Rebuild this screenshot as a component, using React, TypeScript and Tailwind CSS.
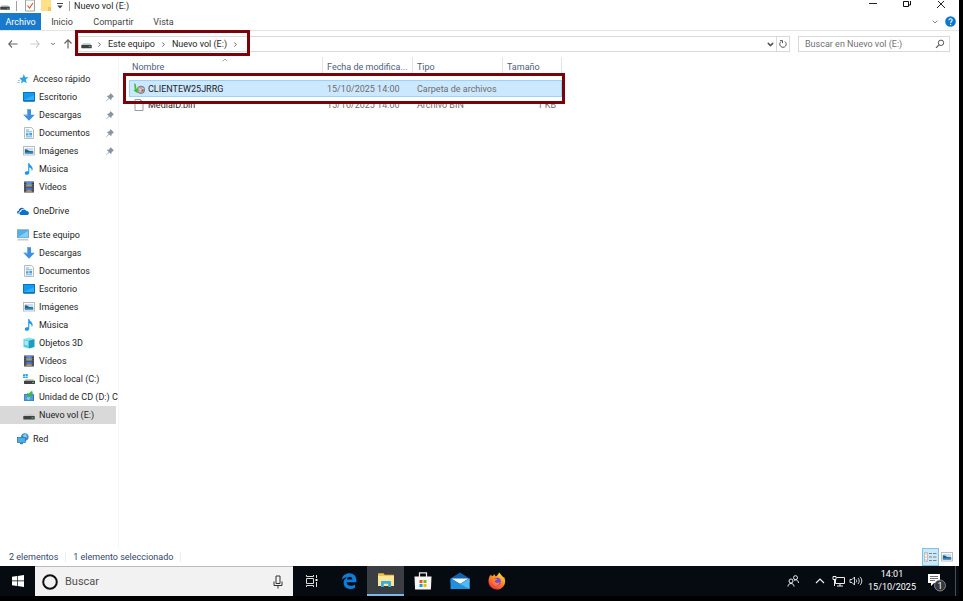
import type { ReactNode } from 'react';
import { ChevronDown, ChevronRight, ChevronUp } from 'lucide-react';
import clsx from 'clsx';

type IconProps = { className?: string };

function DriveIcon({ className = 'w-3 h-3' }: IconProps) {
  return (
    <svg viewBox="0 0 12 12" className={className}>
      <path d="M2 5.2h8l1.500 2.300h-11z" fill="#c4c6c8" />
      <rect x="0.300" y="7" width="11.400" height="3.600" rx="0.400" fill="#3f4244" />
      <rect x="8.500" y="8.300" width="2" height="1" fill="#38d05c" />
    </svg>
  );
}

function SystemDriveIcon() {
  return (
    <svg viewBox="0 0 12 12" className="w-3 h-3">
      <path d="M0 1.200h2v1.700H0zM2.500 1h2.200v1.900H2.500zM0 3.400h2v1.700H0zM2.500 3.400h2.200v1.700H2.500z" fill="#18a5e6" />
      <path d="M2.500 6h7.500l1.500 2h-10z" fill="#c9cbcc" />
      <rect x="1" y="7.700" width="11" height="3.300" rx="0.400" fill="#3f4244" />
      <rect x="9" y="8.900" width="2" height="1" fill="#38d05c" />
    </svg>
  );
}

function DiscIcon() {
  return (
    <svg viewBox="0 0 12 12" className="w-3 h-3">
      <path d="M1 3l9-.5 1 1V10H1z" fill="#3a78b4" />
      <path d="M1.500 3.500h8.500v6H1.500z" fill="#4f9bd8" />
      <circle cx="5.500" cy="7.300" r="1.700" fill="#8fc2e8" />
      <path d="M8.500 0L10 1 7.800 3.800l1.400 1.200-4.700 1.200L4 1.800l1.400 1z" fill="#38bb45" />
    </svg>
  );
}

function StarIcon() {
  return (
    <svg viewBox="0 0 12 12" className="w-3 h-3">
      <path d="M6.800 1l1.300 3.200 3.500.1-2.800 2.200 1 3.800-3-1.700-3 2.200 1-3.400L2.300 5l3.300-.6z" fill="#2f9fe8" />
      <path d="M1 7.500h2M0.500 9.500h2" stroke="#7cc3f2" strokeWidth="0.900" />
    </svg>
  );
}

function DesktopIcon() {
  return (
    <svg viewBox="0 0 12 12" className="w-3 h-3">
      <rect x="0.500" y="1.500" width="11" height="8.500" fill="#109bf0" stroke="#0873c4" />
      <path d="M1 9l10-5v5z" fill="#31b0fa" />
      <path d="M1 10h10" stroke="#0b5fa5" />
    </svg>
  );
}

function DownloadIcon() {
  return (
    <svg viewBox="0 0 12 12" className="w-3 h-3">
      <path d="M4 .3h4v5.500h3.800L6 11.700.2 5.800H4z" fill="#3f8fdc" />
      <path d="M4 .3h1v6.500H2.200l-2-1H4z" fill="#6bb2ee" />
    </svg>
  );
}

function DocumentIcon() {
  return (
    <svg viewBox="0 0 12 12" className="w-3 h-3">
      <path d="M1.500.5h7l2 2v9h-9z" fill="#f6f8f9" stroke="#a3adb4" strokeWidth="0.800" />
      <path d="M3 3h3M3 4.800h6M3 9.800h6" stroke="#63a9d8" strokeWidth="0.900" />
      <path d="M3 6.200h2.500v2.300H3zM6.300 6h2.700v2.500H6.300z" fill="#4c9ed8" />
    </svg>
  );
}

function PictureIcon({ className = 'w-3 h-3' }: IconProps) {
  return (
    <svg viewBox="0 0 12 12" className={className}>
      <rect x="0.500" y="1.500" width="11" height="8.500" fill="#fff" stroke="#b3b8bc" strokeWidth="0.900" />
      <rect x="1.800" y="2.800" width="8.400" height="6" fill="#c4e0f2" />
      <path d="M1.800 4.300l2.200.3 2.200 1.400 4 .3v1.500H1.800z" fill="#2b6177" />
      <path d="M1.800 7h8.400v1.800H1.800z" fill="#3685be" />
    </svg>
  );
}

function MusicIcon() {
  return (
    <svg viewBox="0 0 12 12" className="w-3 h-3">
      <path d="M5.200 0h1.100c.2 2.300 3.700 3 3.300 6.200-.1 1-.6 1.600-1 2 .6-2.300-.6-3.400-2.300-3.800v5c0 3-4.500 3.200-4.500.8 0-1.600 1.900-2.200 3.400-1.600z" fill="#1e96ee" />
    </svg>
  );
}

function VideoIcon() {
  return (
    <svg viewBox="0 0 12 12" className="w-3 h-3">
      <rect x="1" y="0.500" width="10" height="11" fill="#3b3f46" />
      <path d="M2 1v10M10 1v10" stroke="#a8a8a8" strokeWidth="0.800" strokeDasharray="1 1.200" />
      <rect x="3.200" y="1" width="5.600" height="4.500" fill="#568ce0" />
      <path d="M3.200 5.500V4.300l3-1 2.600.7v1.500z" fill="#b59a56" />
      <rect x="3.200" y="6.500" width="5.600" height="4.500" fill="#4278cf" />
      <path d="M3.200 11V9.800l3-1 2.600 1V11z" fill="#c08a50" />
    </svg>
  );
}

function CubeIcon() {
  return (
    <svg viewBox="0 0 12 12" className="w-3 h-3">
      <path d="M.5 2L6 .5 11.500 2 6 3.500z" fill="#8be4f0" />
      <path d="M.5 2L6 3.500v8L.5 10z" fill="#5ccbe0" />
      <path d="M11.500 2L6 3.500v8l5.500-1.500z" fill="#1b9fbd" />
      <path d="M1.500 3.500l3.500 1v4l-3.500-1z" fill="#a5ecf6" />
    </svg>
  );
}

function CloudIcon() {
  return (
    <svg viewBox="0 0 12 12" className="w-3 h-3">
      <path d="M1.600 9C-.6 8.600-.2 5.700 1.700 5.700 2 3 5.400 1.600 7.200 3.800c-3-.2-4 1.500-4.300 2.500C1.600 6.700 1.200 8 1.600 9z" fill="#0a63b8" />
      <path d="M3.900 10C1.600 9.800 1.800 6.700 4 6.700c.5-2.800 4.400-3.100 5.400-.6 3-.3 3.300 3.700.9 3.900z" fill="#0c72cf" />
    </svg>
  );
}

function ComputerIcon() {
  return (
    <svg viewBox="0 0 12 12" className="w-3 h-3">
      <rect x="0.500" y="0.800" width="11" height="7.800" fill="#4db2ec" stroke="#7d99ab" strokeWidth="0.800" />
      <path d="M1 8.200L11 2v6.200z" fill="#83cef7" />
      <path d="M1 9.800h10l.8 1.600H.2z" fill="#c3ccd2" />
    </svg>
  );
}

function NetworkIcon() {
  return (
    <svg viewBox="0 0 12 12" className="w-3 h-3">
      <circle cx="7.800" cy="4" r="3.800" fill="#3e8fcb" />
      <path d="M6 2l3-1 1 3-3 2z" fill="#8acbf1" />
      <rect x="0.400" y="4.500" width="8" height="5" fill="#45b1ee" stroke="#2b6f9e" strokeWidth="0.700" />
      <path d="M3 10h3v1.200H3z" fill="#55788f" />
    </svg>
  );
}

function PinIcon() {
  return (
    <svg viewBox="0 0 10 10" className="w-2.5 h-2.5">
      <path d="M5.500 1L9 4.500l-1 .4-1.500 1.500-.2 1.900L4.200 6.400 1.300 9.200 1 8.900l2.800-3-2-2 2-.3L5.200 2z" fill="#8996a1" />
    </svg>
  );
}

function BackupIcon() {
  return (
    <svg viewBox="0 0 12 12" className="w-3 h-3 shrink-0">
      <circle cx="8" cy="6.800" r="3.700" fill="#b5adad" stroke="#746a6a" strokeWidth="0.800" />
      <path d="M5.800 5.500l2 1.300 2.800-1.500M6.500 9l1.800-2" stroke="#e6e1e1" strokeWidth="0.900" fill="none" />
      <path d="M8.500 6.500h2v1.800h-2z" fill="#96525a" />
      <path d="M1 .3l1.800 1 .6 4.500 1.500-.6-.5 5L.3 7.200l1.500-.4z" fill="#43bd32" />
    </svg>
  );
}

function FileIcon() {
  return (
    <svg viewBox="0 0 12 12" className="w-3 h-3 shrink-0">
      <path d="M2 .5h5.500l2.500 2.500v8.500H2z" fill="#fff" stroke="#8f8f8f" strokeWidth="0.900" />
      <path d="M7.500.5V3H10" fill="none" stroke="#8f8f8f" strokeWidth="0.900" />
    </svg>
  );
}

type Place = { label: string; icon: ReactNode; pinned?: boolean; selected?: boolean };
type Group = { label: string; icon: ReactNode; items: Place[] };

const groups: Group[] = [
  {
    label: 'Acceso rápido',
    icon: <StarIcon />,
    items: [
      { label: 'Escritorio', icon: <DesktopIcon />, pinned: true },
      { label: 'Descargas', icon: <DownloadIcon />, pinned: true },
      { label: 'Documentos', icon: <DocumentIcon />, pinned: true },
      { label: 'Imágenes', icon: <PictureIcon />, pinned: true },
      { label: 'Música', icon: <MusicIcon /> },
      { label: 'Vídeos', icon: <VideoIcon /> },
    ],
  },
  { label: 'OneDrive', icon: <CloudIcon />, items: [] },
  {
    label: 'Este equipo',
    icon: <ComputerIcon />,
    items: [
      { label: 'Descargas', icon: <DownloadIcon /> },
      { label: 'Documentos', icon: <DocumentIcon /> },
      { label: 'Escritorio', icon: <DesktopIcon /> },
      { label: 'Imágenes', icon: <PictureIcon /> },
      { label: 'Música', icon: <MusicIcon /> },
      { label: 'Objetos 3D', icon: <CubeIcon /> },
      { label: 'Vídeos', icon: <VideoIcon /> },
      { label: 'Disco local (C:)', icon: <SystemDriveIcon /> },
      { label: 'Unidad de CD (D:) C', icon: <DiscIcon /> },
      { label: 'Nuevo vol (E:)', icon: <DriveIcon />, selected: true },
    ],
  },
  { label: 'Red', icon: <NetworkIcon />, items: [] },
];

function TitleBar() {
  return (
    <header className="flex h-[13px] shrink-0 items-start overflow-hidden">
      <div className="flex h-[11px] items-center">
        <DriveIcon className="h-3 w-[10px]" />
        <span className="ml-1.5 h-2.5 w-px bg-[#a0a0a0]" />
        <button aria-label="Propiedades" className="ml-2">
          <svg viewBox="0 0 10 12" className="h-3 w-2.5">
            <path d="M.5 0h9v11h-9z" fill="#fff" stroke="#a0a0a0" />
            <path d="M2.500 5.500l2 2.500 3.500-5" fill="none" stroke="#e0592a" strokeWidth="1.200" />
          </svg>
        </button>
        <button aria-label="Nueva carpeta" className="ml-1.5">
          <svg viewBox="0 0 10 12" className="h-3 w-2.5">
            <path d="M0 0h10v11H0z" fill="#ffe08a" />
            <path d="M7 7h3v4H7z" fill="#f3c74f" />
          </svg>
        </button>
        <button aria-label="Personalizar" className="ml-1.5">
          <svg viewBox="0 0 6 6" className="h-1.5 w-1.5">
            <path d="M0 .5h6" stroke="#444" />
            <path d="M.3 2.500h5.400L3 5.400z" fill="#444" />
          </svg>
        </button>
        <span className="ml-1.5 h-2.5 w-px bg-[#a0a0a0]" />
        <h1 className="ml-1 leading-[10px] whitespace-nowrap">Nuevo vol (E:)</h1>
      </div>
      <div className="mr-[13px] ml-auto flex gap-6 pt-px">
        <button aria-label="Minimizar">
          <svg viewBox="0 0 10 8" className="h-2 w-2.5">
            <path d="M1 2.500h8" stroke="#222" />
          </svg>
        </button>
        <button aria-label="Restaurar">
          <svg viewBox="0 0 10 8" className="h-2 w-2.5">
            <path d="M1.500 .5h5v5h-5zM3.500 .5v-1.500h5v5h-2" fill="none" stroke="#111" />
          </svg>
        </button>
        <button aria-label="Cerrar">
          <svg viewBox="0 0 10 8" className="h-2 w-2.5">
            <path d="M1 -1l8 8M9 -1l-8 8" stroke="#222" />
          </svg>
        </button>
      </div>
    </header>
  );
}

function Tabs() {
  return (
    <nav className="flex h-[18px] shrink-0 items-stretch border-b border-[#e3e5e7] text-[#444]">
      <button className="w-[41px] bg-[#1979ca] text-white">Archivo</button>
      <button className="w-[42px]">Inicio</button>
      <button className="w-[61px]">Compartir</button>
      <button className="w-[39px]">Vista</button>
      <button aria-label="Expandir la cinta" className="ml-auto">
        <ChevronDown className="h-2 w-2 text-[#888]" strokeWidth={3} />
      </button>
      <button aria-label="Ayuda" className="mr-[3px] ml-1.5">
        <svg viewBox="0 0 11 11" className="h-[11px] w-[11px]">
          <circle cx="5.500" cy="5.500" r="5.300" fill="#0b78d0" />
          <path d="M3.900 4.300c0-2 3.300-2 3.300-.1 0 1.300-1.600 1.200-1.600 2.600M5.600 7.800v1.200" fill="none" stroke="#fff" strokeWidth="1.100" />
        </svg>
      </button>
    </nav>
  );
}

function AddressBar() {
  return (
    <div className="flex h-[26px] shrink-0 items-center pr-[9px] pl-2 text-[#666]">
      <button aria-label="Atrás">
        <svg viewBox="0 0 10 8" className="h-2 w-2.5">
          <path d="M9.500 4h-9M4 .5L.7 4 4 7.500" fill="none" stroke="#666" strokeWidth="1.100" />
        </svg>
      </button>
      <button aria-label="Adelante" className="ml-3">
        <svg viewBox="0 0 10 8" className="h-2 w-2.5">
          <path d="M.5 4h9M6 .5L9.300 4 6 7.500" fill="none" stroke="#ccc" strokeWidth="1.100" />
        </svg>
      </button>
      <button aria-label="Ubicaciones recientes" className="ml-[10px]">
        <ChevronDown className="h-1.5 w-1.5" strokeWidth={4} />
      </button>
      <button aria-label="Subir" className="ml-2">
        <svg viewBox="0 0 8 10" className="h-2.5 w-2">
          <path d="M4 9.500v-9M.5 4.500L4 .8l3.500 3.700" fill="none" stroke="#666" strokeWidth="1.200" />
        </svg>
      </button>
      <div className="relative ml-1.5 flex h-4 flex-1 items-center border border-[#d9d9d9] text-[#1e1e1e]">
        <DriveIcon className="ml-[2px] h-3 w-[11px]" />
        <ChevronRight className="ml-1 h-[7px] w-[7px] text-[#555]" strokeWidth={3} />
        <a href="#equipo" className="ml-[5px]">Este equipo</a>
        <ChevronRight className="ml-[5px] h-[7px] w-[7px] text-[#555]" strokeWidth={3} />
        <a href="#nuevo-vol" className="ml-[5px]">Nuevo vol (E:)</a>
        <ChevronRight className="ml-[5px] h-[7px] w-[7px] text-[#555]" strokeWidth={3} />
        <button aria-label="Ubicaciones anteriores" className="ml-auto">
          <ChevronDown className="h-[9px] w-[9px] text-[#555]" strokeWidth={4} />
        </button>
        <button aria-label="Actualizar" className="ml-px flex h-full w-[13px] items-center justify-center border-l border-[#d9d9d9]">
          <svg viewBox="0 0 8 8" className="h-2 w-2">
            <path d="M5.800 1.500A3.200 3.200 0 1 1 2 1.600M1 .6h2.500v2.500" fill="none" stroke="#555" />
          </svg>
        </button>
        <div className="pointer-events-none absolute -top-[7px] -left-1 h-[26px] w-[175px] border-3 border-[#7b0209]" />
      </div>
      <div className="ml-2 flex h-4 w-[152px] items-center border border-[#d9d9d9] pr-1 pl-1.5">
        <input
          aria-label="Buscar en Nuevo vol (E:)"
          placeholder="Buscar en Nuevo vol (E:)"
          className="min-w-0 flex-1 outline-none placeholder:text-[#707070]"
        />
        <svg viewBox="0 0 10 10" className="h-2.5 w-2.5">
          <circle cx="6" cy="3.800" r="2.700" fill="none" stroke="#555" />
          <path d="M4 5.800L1 8.800" stroke="#555" strokeWidth="1.200" />
        </svg>
      </div>
    </div>
  );
}

function Sidebar() {
  return (
    <aside className="w-[119px] shrink-0 overflow-hidden border-r border-[#f5f5f5] pt-[13px] pr-0.5">
      {groups.map((group) => (
        <section key={group.label} className="mb-1.5">
          <a href="#lugar" className="flex h-[18px] items-center gap-1 pl-[17px]">
            {group.icon}
            {group.label}
          </a>
          {group.items.map((item) => (
            <a
              key={item.label}
              href="#lugar"
              className={clsx('flex h-[18px] items-center gap-1 pl-[23px] whitespace-nowrap', item.selected && 'bg-[#d9d9d9]')}
            >
              <span className="shrink-0">{item.icon}</span>
              <span>{item.label}</span>
              {item.pinned && (
                <span className="mr-px ml-auto">
                  <PinIcon />
                </span>
              )}
            </a>
          ))}
        </section>
      ))}
    </aside>
  );
}

function FileTable() {
  const th = 'p-0 pb-1 text-left font-normal';
  const head = 'flex h-[19px] items-center border-r border-[#e5e5e5] whitespace-nowrap';
  return (
    <main className="min-w-0 flex-1 pl-[10px]">
      <table className="w-[433px] table-fixed border-collapse text-[#6d6d6d]">
        <thead className="text-[#4c607a]">
          <tr>
            <th className={clsx(th, 'w-[194px]')}>
              <div className={clsx(head, 'relative pl-[3px]')}>
                Nombre
                <ChevronUp className="absolute -top-px left-[92px] h-2 w-2 text-[#777]" />
              </div>
            </th>
            <th className={clsx(th, 'w-[90px]')}>
              <div className={clsx(head, 'pl-1')}>Fecha de modifica...</div>
            </th>
            <th className={clsx(th, 'w-[90px]')}>
              <div className={clsx(head, 'pl-1')}>Tipo</div>
            </th>
            <th className={th}>
              <div className={clsx(head, 'pl-1')}>Tamaño</div>
            </th>
          </tr>
        </thead>
        <tbody>
          <tr className="relative h-[17px] bg-[#cce8ff] outline outline-1 -outline-offset-1 outline-[#99d1ff]">
            <td className="p-0 pl-1 text-[#1e1e1e]">
              <div className="flex items-center gap-[3px]">
                <BackupIcon />
                CLIENTEW25JRRG
              </div>
              <div className="pointer-events-none absolute -top-[7px] -right-[3px] -bottom-[7px] -left-1.5 border-3 border-[#7b0209]" />
            </td>
            <td className="p-0 pl-1">15/10/2025 14:00</td>
            <td className="p-0 pl-1">Carpeta de archivos</td>
            <td className="p-0" />
          </tr>
          <tr className="h-[15px]">
            <td className="p-0 pl-1 text-[#1e1e1e]">
              <div className="flex items-center gap-[3px]">
                <FileIcon />
                MediaID.bin
              </div>
            </td>
            <td className="p-0 pl-1">15/10/2025 14:00</td>
            <td className="p-0 pl-1">Archivo BIN</td>
            <td className="p-0 pr-1.5 text-right">1 KB</td>
          </tr>
        </tbody>
      </table>
    </main>
  );
}

function StatusBar() {
  return (
    <footer className="flex h-[18px] shrink-0 items-center pr-1.5 pl-[9px] text-[#33476b]">
      <span>2 elementos</span>
      <span className="mx-[7px] h-2.5 w-px bg-[#eee]" />
      <span>1 elemento seleccionado</span>
      <span className="mx-[7px] h-2.5 w-px bg-[#eee]" />
      <button aria-label="Detalles" className="ml-auto flex h-[18px] w-[17px] items-center justify-center border border-[#7bc3e6] bg-[#cbe8f6]">
        <svg viewBox="0 0 13 12" className="h-3 w-[13px]">
          <path d="M.5 1.500h3v9h-3z" fill="#fff" stroke="#a9a9a9" strokeWidth="0.700" />
          <path d="M1.500 3h1M1.500 6h1M1.500 9h1" stroke="#cf5a4a" />
          <path d="M5 2.500h3M9 2.500h3.500M5 6h3M9 6h3.500M5 9.500h3M9 9.500h3.500" stroke="#787878" strokeWidth="0.900" />
        </svg>
      </button>
      <button aria-label="Iconos grandes" className="ml-0.5">
        <PictureIcon className="h-3 w-3" />
      </button>
    </footer>
  );
}

function TaskButton({ label, active, children }: { label: string; active?: boolean; children: ReactNode }) {
  return (
    <button
      aria-label={label}
      className={clsx('flex w-[37px] items-center justify-center', active && 'border-b-2 border-[#76b9ed] bg-[#3a3e43]')}
    >
      {children}
    </button>
  );
}

function Taskbar() {
  return (
    <div className="flex h-[30px] shrink-0 items-stretch bg-[#060b12] text-white">
      <button aria-label="Inicio" className="flex w-[35px] items-center justify-center">
        <svg viewBox="0 0 12 12" className="h-3 w-3">
          <path d="M0 1.700l5-.7v4.600H0zM5.700.9L12 0v5.600H5.700zM0 6.300h5V11l-5-.7zM5.700 6.300H12V12l-6.300-.9z" fill="#fff" />
        </svg>
      </button>
      <div className="flex w-[258px] items-center border-t border-[#bbb] bg-[#f2f2f2] pr-2.5 pl-[7px]">
        <svg viewBox="0 0 16 16" className="h-4 w-4">
          <circle cx="8" cy="8" r="6.800" fill="none" stroke="#111" strokeWidth="2" />
        </svg>
        <input
          aria-label="Buscar"
          placeholder="Buscar"
          className="ml-[7px] min-w-0 flex-1 text-[11px] outline-none placeholder:text-[#505050]"
        />
        <svg viewBox="0 0 10 14" className="h-3.5 w-2.5">
          <path d="M3 1h4v7.500H3zM1 6.500v4h8v-4M5 10.500v3" fill="none" stroke="#333" />
        </svg>
      </div>
      <TaskButton label="Vista de tareas">
        <svg viewBox="0 0 13 12" className="h-3 w-[13px]">
          <path d="M1.500 3.500h7v5h-7zM1.500 0v1.500h7V0M1.500 12v-1.500h7V12M11.500 0v3M11.500 7v5" fill="none" stroke="#ddd" />
          <path d="M10.500 4h2v2h-2z" fill="#fff" />
        </svg>
      </TaskButton>
      <TaskButton label="Microsoft Edge">
        <svg viewBox="0 0 16 16" className="h-4 w-4">
          <path d="M.6 7.200C1.400 2.300 4.700.3 8.400.3c4.400 0 7 3 7 7v1.900H5.600c.2 4.100 5.500 4.100 8.500 2.200v3.300c-4.900 2.700-11.500.9-11.500-5 0-2.600 1.400-4.500 3.600-5.500C3.500 4.300 1.500 5.500.6 7.200zM5.800 6.600h5.500c0-3.700-4.900-3.700-5.500 0z" fill="#0b7edb" />
        </svg>
      </TaskButton>
      <TaskButton label="Explorador de archivos" active>
        <svg viewBox="0 0 16 14" className="h-3.5 w-4">
          <path d="M0 1.500C0 .7.300.3 1 .3h4.500l1.200 1.500H15c.7 0 1 .3 1 1V13H0z" fill="#f0c04d" />
          <path d="M0 3h16v10H0z" fill="#ffe596" />
          <path d="M3 14V9.200C3 8.400 3.400 8 4.200 8h7.600c.8 0 1.200.4 1.200 1.200V14h-2.800v-3.300H5.800V14z" fill="#35aee6" />
        </svg>
      </TaskButton>
      <TaskButton label="Microsoft Store">
        <svg viewBox="0 0 18 18" className="h-[18px] w-[18px]">
          <path d="M5.500 5V.8h7V5" fill="none" stroke="#eee" strokeWidth="1.200" />
          <path d="M.5 4.500h17l-.6 13H1.100z" fill="#f6f6f6" />
          <path d="M5.500 8h3v3h-3z" fill="#ef5226" />
          <path d="M9.500 8h3v3h-3z" fill="#7eb801" />
          <path d="M5.500 12h3v3h-3z" fill="#08a2ec" />
          <path d="M9.500 12h3v3h-3z" fill="#fdb708" />
        </svg>
      </TaskButton>
      <TaskButton label="Correo">
        <svg viewBox="0 0 20 18" className="h-[18px] w-5">
          <path d="M.5 6.500L10 .5l9.500 6v4H.5z" fill="#1162ae" />
          <path d="M1.500 6.500h17L10 12z" fill="#f6f8fa" />
          <path d="M.5 6.500L10 12l9.500-5.500V17H.5z" fill="#2090df" />
          <path d="M10 12l9.500-5.500V17z" fill="#4fbaf5" />
        </svg>
      </TaskButton>
      <TaskButton label="Firefox">
        <svg viewBox="0 0 18 18" className="h-[18px] w-[18px]">
          <defs>
            <linearGradient id="fox" x1="0.800" y1="0" x2="0.200" y2="1">
              <stop offset="0" stopColor="#ffe23e" />
              <stop offset="0.450" stopColor="#ff8b22" />
              <stop offset="1" stopColor="#f2264f" />
            </linearGradient>
          </defs>
          <path d="M1.500 4.500L3 2.500l.9 1.700L5.500 3.600 6 2l1.800 2.400C9.500 4 10 1.500 11.500.5c.4 2 3 3 3.900 5l.7-.6c3 6-.8 12.600-7.100 12.600S-1.600 11.500 1.500 4.500z" fill="url(#fox)" />
          <circle cx="9" cy="9.600" r="3.800" fill="#7b45dc" />
          <path d="M4 7c2-1.500 3.500-.5 5.500.3-.8 1.200-2.500 1-2.700 2.300.7 1.700 3.200 1.600 4.900.5-.3 4-5.700 4.500-7.400 1C3.600 9.800 3.500 8.300 4 7z" fill="#ff7d2b" />
        </svg>
      </TaskButton>

      <div className="ml-auto flex items-center">
        <button aria-label="Contactos">
          <svg viewBox="0 0 12 12" className="h-3 w-3">
            <circle cx="4" cy="6" r="2" fill="none" stroke="#eee" />
            <path d="M1 11.500C1 7.500 7 7.500 7 11.500" fill="none" stroke="#eee" />
            <circle cx="8.500" cy="2.700" r="2" fill="none" stroke="#eee" />
            <path d="M7 5.500c2-1.500 4.500 0 4.500 2.500" fill="none" stroke="#eee" />
          </svg>
        </button>
        <button aria-label="Iconos ocultos" className="ml-4">
          <svg viewBox="0 0 10 8" className="h-2 w-2.5">
            <path d="M1 6l4-4 4 4" fill="none" stroke="#eee" strokeWidth="1.200" />
          </svg>
        </button>
        <button aria-label="Red" className="ml-[7px]">
          <svg viewBox="0 0 13 12" className="h-3 w-[13px]">
            <path d="M4.500 2.500h8v6h-9V5M8 8.500v2.500M5 11h6M1 1.500h3v3H1zM2.500 4.500V11" fill="none" stroke="#eee" />
          </svg>
        </button>
        <button aria-label="Volumen" className="ml-1">
          <svg viewBox="0 0 14 12" className="h-3 w-3.5">
            <path d="M1 4.500h2l2.500-2.500v8L3 7.500H1zM7 4.500c.9 1 .9 2 0 3M9 3c1.600 2 1.600 4 0 6M11 1.800c2.400 2.700 2.400 5.700 0 8.400" fill="none" stroke="#eee" strokeWidth="0.900" />
          </svg>
        </button>
        <time dateTime="2025-10-15T14:01" className="ml-1 w-[50px] text-center leading-[13px]">
          14:01
          <br />
          15/10/2025
        </time>
        <button aria-label="Notificaciones" className="ml-2.5">
          <svg viewBox="0 0 20 20" className="mt-1 h-5 w-5">
            <path d="M1 1h12v9H7l-3 3v-3H1z" fill="#fff" />
            <path d="M3 3.500h8M3 5.500h8M3 7.500h5" stroke="#333" strokeWidth="0.700" />
            <circle cx="13" cy="12.500" r="5.500" fill="#34373b" stroke="#999" strokeWidth="0.800" />
            <text x="13" y="16" fontSize="9" textAnchor="middle" fill="#fff">1</text>
          </svg>
        </button>
        <span className="mr-[3px] ml-2 h-[30px] w-px bg-[#4b4f55]" />
      </div>
    </div>
  );
}

export default function App() {
  return (
    <div className="flex h-screen flex-col bg-black pr-1 pb-[5px] font-[Roboto,'Open_Sans',sans-serif] text-[9px] leading-3 text-[#1e1e1e]">
      <div className="flex min-h-0 flex-1 flex-col bg-white">
        <TitleBar />
        <Tabs />
        <AddressBar />
        <div className="flex min-h-0 flex-1">
          <Sidebar />
          <FileTable />
        </div>
        <StatusBar />
      </div>
      <Taskbar />
    </div>
  );
}
